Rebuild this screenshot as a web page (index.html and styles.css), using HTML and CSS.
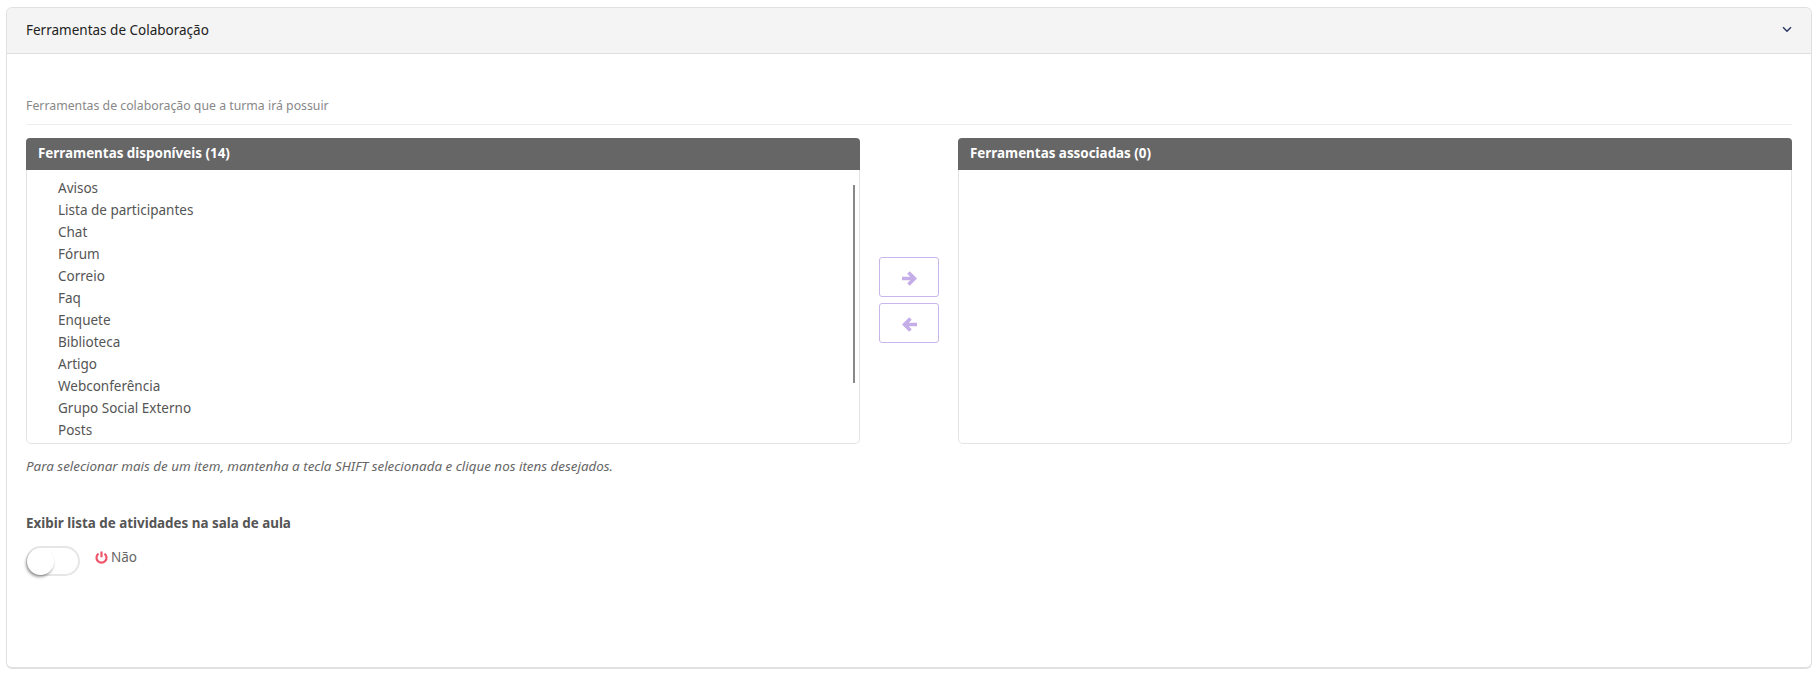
FILE: index.html
```html
<!DOCTYPE html>
<html lang="pt-BR">
<head>
<meta charset="utf-8">
<title>Ferramentas de Colaboração</title>
<link rel="stylesheet" href="styles.css">
</head>
<body>
<section class="card">
  <header class="card-head">
    <span class="card-title">Ferramentas de Colaboração</span>
    <svg class="chevron" width="10" height="7" viewBox="0 0 10 7"><path d="M1 1.2 5 5.2 9 1.2" fill="none" stroke="#2d3b63" stroke-width="1.5"/></svg>
  </header>
  <div class="card-body">
    <p class="subtitle">Ferramentas de colaboração que a turma irá possuir</p>
    <div class="picker">
      <div class="panel">
        <h3 class="panel-head">Ferramentas disponíveis (14)</h3>
        <div class="panel-box">
          <ul class="items">
            <li>Avisos</li>
            <li>Lista de participantes</li>
            <li>Chat</li>
            <li>Fórum</li>
            <li>Correio</li>
            <li>Faq</li>
            <li>Enquete</li>
            <li>Biblioteca</li>
            <li>Artigo</li>
            <li>Webconferência</li>
            <li>Grupo Social Externo</li>
            <li>Posts</li>
          </ul>
          <span class="scrollbar"></span>
        </div>
      </div>
      <div class="moves">
        <button class="move" type="button" aria-label="Associar">
          <svg width="15" height="15" viewBox="0 0 15 15"><path d="M0 7.5H12M6.5 1.5 12.5 7.5 6.5 13.5" fill="none" stroke="#c5aee8" stroke-width="3.6"/></svg>
        </button>
        <button class="move" type="button" aria-label="Remover">
          <svg width="15" height="15" viewBox="0 0 15 15"><path d="M15 7.5H3M8.5 1.5 2.5 7.5 8.5 13.5" fill="none" stroke="#c5aee8" stroke-width="3.6"/></svg>
        </button>
      </div>
      <div class="panel">
        <h3 class="panel-head">Ferramentas associadas (0)</h3>
        <div class="panel-box"></div>
      </div>
    </div>
    <p class="note">Para selecionar mais de um item, mantenha a tecla SHIFT selecionada e clique nos itens desejados.</p>
    <h4 class="field-label">Exibir lista de atividades na sala de aula</h4>
    <div class="switch-row">
      <span class="switch"><span class="knob"></span></span>
      <span class="state">
        <svg width="13" height="13" viewBox="0 0 13 13"><path d="M6.5 .5V6.3M3.5 2.6A5 5 0 1 0 9.5 2.6" fill="none" stroke="#f0566b" stroke-width="2.2"/></svg>
        Não
      </span>
    </div>
  </div>
</section>
</body>
</html>
```
FILE: styles.css
```css
* { box-sizing: border-box; }
html, body { margin: 0; padding: 0; background: #fff; }
body {
  height: 679px;
  overflow: hidden;
  padding: 7px 7px 10px 6px;
  font-family: "Noto Sans", "Open Sans", sans-serif;
  color: #555;
}
.card {
  height: 662px;
  border: 1px solid #e0e0e0;
  border-bottom-width: 2px;
  border-radius: 6px;
  overflow: hidden;
}
.card-head {
  height: 46px;
  background: #f4f4f4;
  border-bottom: 1px solid #dedede;
  display: flex;
  align-items: center;
  justify-content: space-between;
  padding: 0 19px 2px 19px;
}
.card-title { font-size: 13.5px; color: #222; }
.card-body { padding: 43px 19px 0; }
.subtitle {
  margin: 0;
  height: 28px;
  padding-bottom: 9px;
  font-size: 12.3px;
  line-height: 18px;
  color: #888;
  border-bottom: 1px solid #eee;
}
.picker {
  display: grid;
  grid-template-columns: 834px 98px 834px;
  margin-top: 13px;
}
.panel { display: flex; flex-direction: column; height: 306px; }
.panel-head {
  margin: 0;
  height: 32px;
  padding: 0 12px;
  background: #666;
  color: #fff;
  font-size: 13.4px;
  font-weight: 700;
  line-height: 31px;
  border-radius: 4px 4px 0 0;
}
.panel-box {
  flex: 1;
  position: relative;
  border: 1px solid #e3e3e3;
  border-top: 0;
  border-radius: 0 0 5px 5px;
}
.items {
  list-style: none;
  margin: 0;
  padding: 7px 0 0 31px;
  font-size: 13.5px;
  line-height: 22px;
  color: #555;
}
.scrollbar {
  position: absolute;
  top: 15px;
  right: 4px;
  width: 2px;
  height: 198px;
  background: #888;
}
.moves {
  display: flex;
  flex-direction: column;
  align-items: center;
  gap: 6px;
  padding-top: 119px;
}
.move {
  width: 60px;
  height: 40px;
  padding: 2px 0 0;
  background: #fff;
  border: 1px solid #c9b6ea;
  border-radius: 3px;
  display: flex;
  align-items: center;
  justify-content: center;
}
.note {
  margin: 13px 0 0;
  font-size: 13.4px;
  line-height: 18px;
  font-style: italic;
  color: #666;
}
.field-label {
  margin: 38px 0 0;
  font-size: 13.4px;
  line-height: 20px;
  font-weight: 700;
  color: #555;
}
.switch-row { display: flex; align-items: flex-start; gap: 15px; margin-top: 13px; }
.switch {
  width: 54px;
  height: 30px;
  border: 2px solid #e6e6e6;
  border-radius: 15px;
  position: relative;
  background: #fff;
}
.knob {
  position: absolute;
  left: -1px;
  top: 0;
  width: 27px;
  height: 27px;
  border-radius: 50%;
  background: #fff;
  box-shadow: -1px 2px 3px rgba(0,0,0,.4);
}
.state { display: flex; align-items: center; gap: 3px; font-size: 13.5px; line-height: 22px; color: #666; }
```
